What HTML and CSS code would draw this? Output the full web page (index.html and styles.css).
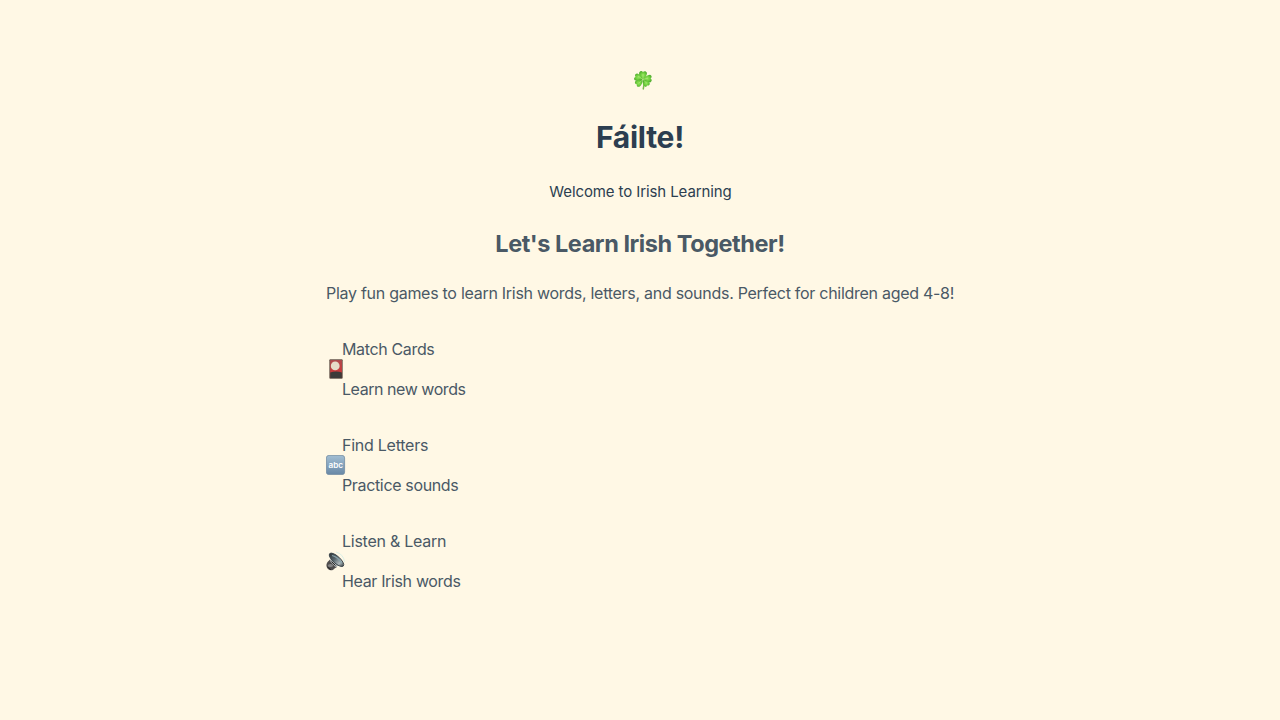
FILE: index.html
```html
<!DOCTYPE html>
<html lang="en">
<head>
<meta charset="utf-8">
<title>Fáilte!</title>
<link rel="stylesheet" href="styles.css">
</head>
<body>
<main class="welcome">
  <header class="header">
    <div class="logo">
      <svg class="icon" viewBox="0 0 20 20" aria-hidden="true">
        <defs><radialGradient id="leaf"><stop offset="0" stop-color="#93e45c"/><stop offset=".65" stop-color="#6ccb3c"/><stop offset="1" stop-color="#52ae30"/></radialGradient></defs>
        <path d="M10 10C11 13 11.300 16 10.200 19.500" fill="none" stroke="#79b94c" stroke-width="1.500"/>
        <g fill="url(#leaf)">
          <path d="M9.800 9.500C6.500 8 5.700 5 6.300 2.300C7.500.6 9 .7 9.900 2.100C11.500.5 13.200 1.100 14 3C13.700 6 12.300 8.200 9.800 9.500Z"/>
          <path d="M10 9.500C12 6.500 14 5 17 4.700C19 5.600 19.200 7.300 17.600 8.600C19.400 9.900 19 11.500 17.200 12.400C14.200 12.600 11.700 11.500 10 9.500Z"/>
          <path d="M9.500 9.700C7 11.500 4 11.300 1.800 10.300C.5 8.800 1 7.600 2.500 6.900C1.300 5.200 2.500 3.800 4.300 3.600C7 4.500 9 6.500 9.500 9.700Z"/>
          <path d="M9.400 9.800C9.800 13 8.600 15.200 6.400 16.800C4.300 17.100 3.400 16 3.900 14.400C2 14.300 1.400 12.900 2.300 11.300C4.500 9.700 7 9.100 9.400 9.800Z"/>
          <path d="M10.200 9.800C13.300 9.900 15.600 11.300 16.800 13.500C16.700 15.300 15.400 16 14 15.400C13.600 17 12.600 17.200 11.500 16.200C10 14 9.500 12 10.200 9.800Z"/>
        </g>
        <path d="M10 9.500L5 6M10 9.500L10 4M10 9.500L15 8M10 9.500L6 13M10 9.500L13.500 13" stroke="#b6ea80" stroke-width=".6"/>
      </svg>
    </div>
    <h1 class="title">Fáilte!</h1>
    <p class="subtitle">Welcome to Irish Learning</p>
  </header>
  <section class="intro">
    <h2 class="heading">Let's Learn Irish Together!</h2>
    <p class="lead">Play fun games to learn Irish words, letters, and sounds. Perfect for children aged 4-8!</p>
  </section>
  <section class="features">
    <article class="feature">
      <svg class="icon" viewBox="0 0 20 20" aria-hidden="true">
        <defs><linearGradient id="card" x2="0" y2="1"><stop stop-color="#b04a4d"/><stop offset=".55" stop-color="#c83b3d"/></linearGradient></defs>
        <rect x="3.300" y=".2" width="13.400" height="19.500" rx="1" fill="#66564c"/>
        <rect x="4.200" y="1.100" width="11.700" height="17.800" fill="url(#card)"/>
        <path d="M4.200 13.600Q10 11.400 15.900 13.600V18.900H4.200Z" fill="#3d3b3a"/>
        <circle cx="9.200" cy="6.900" r="4.400" fill="#e6dbc8"/>
      </svg>
      <div class="copy"><p>Match Cards</p><p class="copy-tight">Learn new words</p></div>
    </article>
    <article class="feature">
      <svg class="icon" viewBox="0 0 20 20" aria-hidden="true">
        <defs><linearGradient id="tile" x2="0" y2="1"><stop stop-color="#a2bed3"/><stop offset="1" stop-color="#6888a6"/></linearGradient></defs>
        <rect x=".4" y=".4" width="18.200" height="19.200" rx="2.500" fill="url(#tile)" stroke="#718ca2" stroke-width=".8"/>
        <text class="tile-text" x="9.800" y="12.600" text-anchor="middle" textLength="14.500" lengthAdjust="spacingAndGlyphs">abc</text>
      </svg>
      <div class="copy"><p class="copy-loose">Find Letters</p><p>Practice sounds</p></div>
    </article>
    <article class="feature">
      <svg class="icon" viewBox="0 0 20 20" aria-hidden="true">
        <defs><linearGradient id="cone"><stop stop-color="#30363a"/><stop offset=".4" stop-color="#59676e"/><stop offset=".75" stop-color="#aeb8bb"/><stop offset="1" stop-color="#40474b"/></linearGradient></defs>
        <path d="M10 1Q17.500 3 18.500 11" fill="none" stroke="#d7eee6" stroke-width=".9"/>
        <path d="M4 8.500L11 16Q8.500 17 7.500 18.500Q4.500 20.500 1.700 17.800Q-.8 14.500 1.500 11Z" fill="#504e4e"/>
        <path d="M3.200 4.500Q5 8 4.300 10.500L9.500 16Q12.500 14 17 15Z" fill="#b2b7b8"/>
        <ellipse cx="10.500" cy="8.800" rx="9.200" ry="3.500" transform="rotate(42 10.500 8.800)" fill="url(#cone)" stroke="#384247" stroke-width=".9"/>
        <path d="M6 4.500Q12 6 15.800 12.500" fill="none" stroke="#87a3ab" stroke-width="1.200"/>
        <ellipse cx="4.500" cy="14.500" rx="2.600" ry="1.600" fill="#858585"/>
        <path d="M1.500 16L5 18.800M5.500 10.500L9.500 14.500" stroke="#252525" stroke-width="1"/>
      </svg>
      <div class="copy"><p class="copy-loose">Listen &amp; Learn</p><p>Hear Irish words</p></div>
    </article>
  </section>
</main>
</body>
</html>
```
FILE: styles.css
```css
body {
  margin: 0;
  background: #fff8e5;
  color: #4a5965;
  font: 16px/24px Inter, "Liberation Sans", sans-serif;
}
.welcome {
  width: 628px;
  min-height: 720px;
  box-sizing: border-box;
  margin: 0 auto;
  padding-top: 68px;
}
.header, .intro { text-align: center; }
.header { color: #2c3e50; }
.logo { display: flex; justify-content: center; height: 24px; padding: 2px 0 0 5px; box-sizing: border-box; }
.icon { display: block; width: 20px; height: 20px; flex: none; }
.title { margin: 21px 0 0; font-size: 30px; line-height: 48px; font-weight: 700; letter-spacing: -0.25px; }
.subtitle { margin: 19px 0 0; padding-left: 1px; font-size: 15px; line-height: 24px; letter-spacing: -0.1px; }
.heading { margin: 22px 0 0; font-size: 23.5px; line-height: 36px; font-weight: 700; letter-spacing: -0.45px; }
.lead { margin: 19px 0 0; white-space: nowrap; letter-spacing: -0.28px; }
.features { display: grid; gap: 32px; padding-top: 32px; }
.feature { display: flex; align-items: center; height: 64px; }
.copy { display: grid; gap: 16px; margin-left: -4px; letter-spacing: -0.35px; }
.copy p { margin: 0; }
.copy .copy-tight { letter-spacing: -0.45px; }
.copy .copy-loose { letter-spacing: -0.25px; }
.tile-text { fill: #fff; font: 600 7.5px Inter, sans-serif; }
```
